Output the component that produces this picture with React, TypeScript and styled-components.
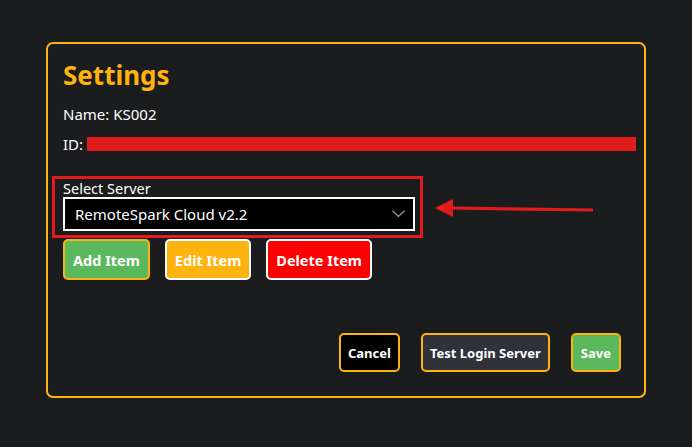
import React from "react";
import styled, { createGlobalStyle } from "styled-components";

const Global = createGlobalStyle`
  html, body { margin: 0; padding: 0; background: #1b1c1e; }
  body { font-family: "Noto Sans", "Open Sans", sans-serif; color: #ffffff; }
  * { box-sizing: border-box; }
`;

const Page = styled.div`
  position: relative;
  width: 692px;
  height: 447px;
  padding: 42px 0 0 46px;
`;

const Panel = styled.div`
  width: 600px;
  height: 356px;
  border: 2px solid #ffb30f;
  border-radius: 7px;
  padding: 14px 8px 24px 15px;
  display: flex;
  flex-direction: column;
`;

const Title = styled.h1`
  margin: 0;
  font-size: 26px;
  font-weight: 700;
  color: #ffb30f;
  line-height: 34px;
`;

const InfoRow = styled.div<{ $top: number }>`
  display: flex;
  align-items: center;
  gap: 4px;
  font-size: 15px;
  line-height: 20px;
  margin-top: ${(p) => p.$top}px;
`;

const Redacted = styled.div`
  flex: 1;
  height: 14px;
  background: #e21c1c;
`;

const Annotation = styled.div`
  margin: 22px 0 0 -11px;
  width: 371px;
  border: 3px solid #e21c1c;
  padding: 0 5px 4px 8px;
`;

const Label = styled.div`
  font-size: 14.5px;
  line-height: 18px;
`;

const SelectWrap = styled.div`
  position: relative;
  height: 34px;
`;

const Select = styled.select`
  appearance: none;
  width: 100%;
  height: 34px;
  background: #000;
  color: #fff;
  border: 2px solid #fff;
  border-radius: 0;
  padding: 0 30px 0 10px;
  font-family: "Noto Sans", sans-serif;
  font-size: 15px;
  outline: none;
`;

const Chevron = styled.svg`
  position: absolute;
  right: 10px;
  top: 13px;
  pointer-events: none;
`;

const ButtonRow = styled.div`
  display: flex;
  gap: 15px;
  margin-top: 1px;
`;

const Btn = styled.button<{ $bg: string; $border: string; $h: number; $fs: number; $px: number }>`
  height: ${(p) => p.$h}px;
  padding: 0 ${(p) => p.$px}px;
  background: ${(p) => p.$bg};
  border: 2px solid ${(p) => p.$border};
  border-radius: 5px;
  color: #fff;
  font-family: "Noto Sans", sans-serif;
  font-weight: 700;
  font-size: ${(p) => p.$fs}px;
  cursor: pointer;
`;

const Footer = styled.div`
  margin-top: auto;
  display: flex;
  justify-content: flex-end;
  gap: 21px;
  padding-right: 15px;
`;

const Arrow = styled.svg`
  position: absolute;
  left: 430px;
  top: 195px;
`;

export default function App() {
  return (
    <>
      <Global />
      <Page>
        <Panel>
          <Title>Settings</Title>
          <InfoRow $top={12}>Name: KS002</InfoRow>
          <InfoRow $top={10}>
            ID: <Redacted />
          </InfoRow>
          <Annotation>
            <Label>Select Server</Label>
            <SelectWrap>
              <Select defaultValue="rs">
                <option value="rs">RemoteSpark Cloud v2.2</option>
              </Select>
              <Chevron width="13" height="8" viewBox="0 0 13 8">
                <path d="M0.5 0.8 L6.5 6.5 L12.5 0.8" fill="none" stroke="#9a9a9a" strokeWidth="1.2" />
              </Chevron>
            </SelectWrap>
          </Annotation>
          <ButtonRow>
            <Btn $bg="#5cb85c" $border="#ffb30f" $h={41} $fs={14.5} $px={8}>Add Item</Btn>
            <Btn $bg="#ffb30f" $border="#ffffff" $h={41} $fs={14.5} $px={8}>Edit Item</Btn>
            <Btn $bg="#ff0000" $border="#ffffff" $h={41} $fs={14.5} $px={8}>Delete Item</Btn>
          </ButtonRow>
          <Footer>
            <Btn $bg="#000000" $border="#ffb30f" $h={39} $fs={13} $px={7}>Cancel</Btn>
            <Btn $bg="#2f3239" $border="#ffb30f" $h={39} $fs={13} $px={7}>Test Login Server</Btn>
            <Btn $bg="#5cb85c" $border="#ffb30f" $h={39} $fs={13} $px={8}>Save</Btn>
          </Footer>
        </Panel>
        <Arrow width="170" height="30" viewBox="0 0 170 30">
          <path d="M22 13 L163 15" stroke="#e21c1c" strokeWidth="3.2" fill="none" />
          <path d="M5 13 L23 4 L23 22 Z" fill="#e21c1c" />
        </Arrow>
      </Page>
    </>
  );
}
